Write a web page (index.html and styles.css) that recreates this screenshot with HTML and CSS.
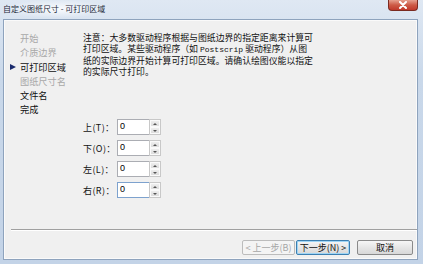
FILE: index.html
```html
<!DOCTYPE html>
<html>
<head>
<meta charset="utf-8">
<link rel="stylesheet" href="styles.css">
</head>
<body>
<div class="window">
  <div class="titlebar">
    <span class="title">自定义图纸尺寸 - 可打印区域</span>
    <div class="close"><svg width="10" height="8" viewBox="0 0 10 8"><path d="M2 1 L8 7 M8 1 L2 7" stroke="#fff" stroke-width="2" stroke-linecap="round"/></svg></div>
  </div>
  <div class="client">
    <div class="main">
      <ul class="nav">
        <li class="dim">开始</li>
        <li class="dim">介质边界</li>
        <li class="current"><span class="arrow"></span>可打印区域</li>
        <li class="dim">图纸尺寸名</li>
        <li>文件名</li>
        <li>完成</li>
      </ul>
      <div class="content">
        <p class="note">注意：大多数驱动程序根据与图纸边界的指定距离来计算可<br>打印区域。某些驱动程序（如 <span class="latin">Postscrip</span> 驱动程序）从图<br>纸的实际边界开始计算可打印区域。请确认绘图仪能以指定<br>的实际尺寸打印。</p>
        <div class="fields">
          <div class="field"><span class="lbl">上(T)：</span><span class="input">0</span><span class="spin"><i class="up"></i><i class="down"></i></span></div>
          <div class="field"><span class="lbl">下(O)：</span><span class="input">0</span><span class="spin"><i class="up"></i><i class="down"></i></span></div>
          <div class="field"><span class="lbl">左(L)：</span><span class="input">0</span><span class="spin"><i class="up"></i><i class="down"></i></span></div>
          <div class="field"><span class="lbl">右(R)：</span><span class="input focus">0</span><span class="spin"><i class="up"></i><i class="down"></i></span></div>
        </div>
      </div>
    </div>
    <div class="sep"></div>
    <div class="footer">
      <button class="btn disabled">&lt; 上一步(B)</button>
      <button class="btn default">下一步(N) &gt;</button>
      <button class="btn cancel">取消</button>
    </div>
  </div>
</div>
</body>
</html>
```
FILE: styles.css
```css
* { box-sizing: border-box; }
html, body { margin: 0; padding: 0; }
body {
  width: 423px; height: 264px; overflow: hidden;
  font-family: "Noto Sans CJK SC", "DejaVu Sans", sans-serif;
}
.window {
  width: 423px; height: 264px;
  background: linear-gradient(#dfe8f3, #c9d8ea 30%, #c3d3e7);
  display: flex; flex-direction: column;
}
.titlebar {
  height: 19px; flex: none;
  display: flex; align-items: flex-start; justify-content: space-between;
  padding-left: 2px;
}
.title {
  font-size: 8px; line-height: 18px; color: #1e2a3a;
  background: radial-gradient(closest-side, rgba(255,255,255,0.85), rgba(255,255,255,0));
  padding: 0 6px 0 1px;
}
.close {
  width: 30px; height: 11px; margin-right: 5px;
  background: linear-gradient(#e6a08f, #cd5a46 50%, #c0392b);
  border: 1px solid #7a2a20; border-top: none;
  border-radius: 0 0 4px 4px;
  display: flex; align-items: center; justify-content: center;
}
.client {
  flex: 1; margin: 0 5px 4px 3px;
  background: #f0f0f0;
  border: 1px solid #8ea3bd;
  box-shadow: inset 0 0 0 1px #fafafa;
  display: flex; flex-direction: column;
}
.main { flex: 1; display: flex; padding-top: 10px; }
.nav {
  list-style: none; margin: 0; padding: 1px 0 0 16px;
  width: 79px; flex: none;
  font-size: 9.2px; line-height: 14.3px; color: #111;
}
.nav li { position: relative; white-space: nowrap; }
.nav .dim { color: #a8a8a8; }
.arrow {
  position: absolute; left: -10px; top: 4px;
  width: 0; height: 0;
  border-left: 6px solid #1a2a6c;
  border-top: 3.5px solid transparent; border-bottom: 3.5px solid transparent;
}
.content { flex: 1; }
.note {
  margin: 2px 0 0 0; font-size: 8.85px; line-height: 11px; color: #111;
  white-space: nowrap;
}
.latin { font-family: "Liberation Mono", monospace; font-size: 8px; }
.fields { margin-top: 42px; display: flex; flex-direction: column; gap: 5px; }
.field { display: flex; align-items: center; height: 16px; }
.lbl { width: 34px; font-size: 9px; letter-spacing: 0.4px; color: #111; white-space: nowrap; }
.input {
  width: 32px; height: 16px; background: #fff;
  border: 1px solid #abadb3; border-right: none;
  font-family: "Liberation Sans", sans-serif; font-size: 9px; line-height: 12px;
  padding-left: 2px; color: #000;
}
.input.focus { border-color: #7da2ce; }
.spin {
  width: 12px; height: 16px; display: flex; flex-direction: column;
  border: 1px solid #c8c8c8; background: #e4e4e4;
}
.spin i {
  flex: 1; display: flex; align-items: center; justify-content: center;
  border: 1px solid #fafafa; background: linear-gradient(#eeeeee, #dcdcdc);
}
.spin .up::after {
  content: ""; border-bottom: 2px solid #555;
  border-left: 2px solid transparent; border-right: 2px solid transparent;
}
.spin .down::after {
  content: ""; border-top: 2px solid #555;
  border-left: 2px solid transparent; border-right: 2px solid transparent;
}
.sep {
  height: 2px; margin: 0 0 0 7px; flex: none;
  border-top: 1px solid #a0a0a0; border-bottom: 1px solid #ffffff;
}
.footer {
  height: 28px; flex: none;
  display: flex; align-items: flex-start; justify-content: flex-end;
  padding: 9px 4px 0 0;
}
.btn {
  height: 15px; padding: 0; margin: 0;
  font-family: "Noto Sans CJK SC", sans-serif; font-size: 9px; line-height: 12px;
  background: linear-gradient(#f6f6f6, #e6e6e6 50%, #d8d8d8);
  border: 1px solid #8a8a8a; border-radius: 2px; color: #111;
}
.btn.disabled { width: 53px; color: #a6a6a6; border-color: #bcbcbc; background: #f4f4f4; }
.btn.default { width: 54px; margin-left: 1px; border-color: #3c7fb1; box-shadow: inset 0 0 0 1px #9fd5f5; }
.btn.cancel { width: 56px; margin-left: 7px; }
```
